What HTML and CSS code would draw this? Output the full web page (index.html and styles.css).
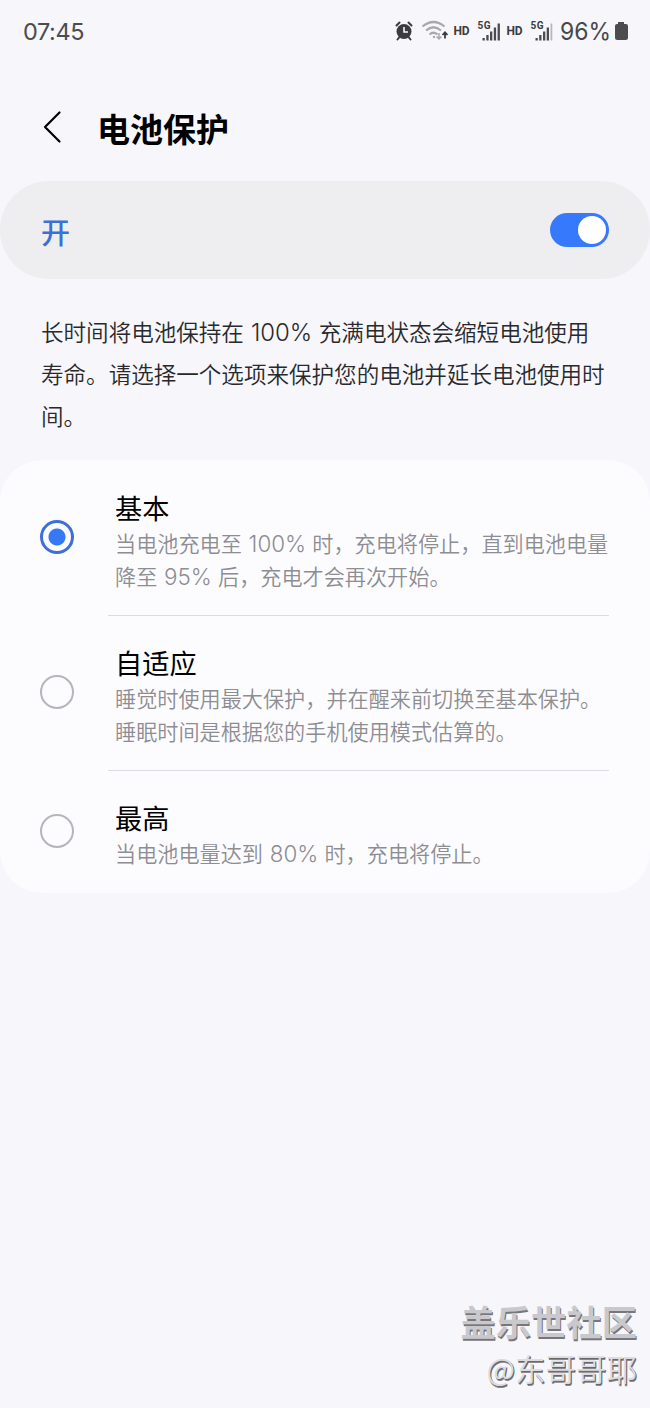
FILE: index.html
```html
<!DOCTYPE html>
<html lang="zh-CN">
<head>
<meta charset="utf-8">
<title>电池保护</title>
<link rel="stylesheet" href="styles.css">
</head>
<body>
<div class="screen">
  <header class="status">
    <span class="clock">07:45</span>
    <svg class="status-icons" width="236" height="30" viewBox="394 16 236 30">
      <g fill="none" stroke="#3c3c3e">
        <circle cx="404" cy="31.500" r="7.500" fill="#3c3c3e" stroke="none"/>
        <path d="M396.500 25.500l3-3M411.500 25.500l-3-3M399.500 37l-2 2.500M408.500 37l2 2.500" stroke-width="2" stroke-linecap="round"/>
        <path d="M404 27v5h4" stroke="#f6f6fb" stroke-width="1.600"/>
      </g>
      <g fill="none" stroke="#a9a9ad" stroke-width="2.200">
        <path d="M422.500 26.500Q433.500 17.500 444.500 26.500M426 30.500Q433.500 24 441 30.500M429.500 34.500Q433.500 31 437.500 34.500"/>
        <circle cx="434" cy="37" r="1.200" fill="#a9a9ad" stroke="none"/>
        <path d="M439 33v6M436.500 36.500l2.500 2.500 2.500-2.500" stroke-width="1.500"/>
        <path d="M445 38.500v-6M442.500 35l2.500-2.700 2.500 2.700" stroke="#3c3c3e" stroke-width="1.800"/>
      </g>
      <g class="status-label">
        <text x="453.500" y="35.300" font-size="12" textLength="16">HD</text>
        <text x="477.500" y="29" font-size="10" textLength="13">5G</text>
        <text x="506.500" y="35.300" font-size="12" textLength="16">HD</text>
        <text x="530.500" y="29" font-size="10" textLength="13">5G</text>
      </g>
      <g fill="#4c4c4e">
        <path d="M482.500 38h2.300v2.500h-2.300zM486.300 35h2.300v5.500h-2.300zM490 31.500h2.300v9h-2.300zM493.800 27.500h2.300v13h-2.300zM497.600 23.500h2.300v17h-2.300z"/>
        <path d="M535.500 38h2.300v2.500h-2.300zM539.200 35h2.300v5.500h-2.300zM543 31.500h2.300v9h-2.300zM546.700 27.500h2.300v13h-2.300z"/>
        <path d="M550.500 23.500h1.800v17h-1.800z" fill="#b8b8bc"/>
        <path d="M618 22h6v2h2q2 0 2 2v11.500q0 2.500-2.500 2.500h-8q-2.500 0-2.500-2.500v-11.500q0-2 2-2h1z"/>
      </g>
      <text class="percent" x="560" y="40" textLength="51" lengthAdjust="spacingAndGlyphs">96%</text>
    </svg>
  </header>

  <div class="title-bar">
    <svg class="back" width="20" height="34" viewBox="0 0 20 34"><path d="M17.500 2.500L3 17l14.500 14.500" fill="none" stroke="#000" stroke-width="2.200" stroke-linecap="round" stroke-linejoin="round"/></svg>
    <h1 class="title">电池保护</h1>
  </div>

  <div class="master">
    <span class="master-label">开</span>
    <span class="switch"><span class="knob"></span></span>
  </div>

  <p class="intro">长时间将电池保持在 <span class="num">100%</span> 充满电状态会缩短电池使用<br>寿命。请选择一个选项来保护您的电池并延长电池使用时<br>间。</p>

  <main class="options">
    <section class="option">
      <span class="radio radio-on"></span>
      <div class="option-body">
        <h2 class="option-name">基本</h2>
        <p class="option-desc">当电池充电至 <span class="num">100%</span> 时，充电将停止，直到电池电量<br>降至 <span class="num">95%</span> 后，充电才会再次开始。</p>
      </div>
    </section>
    <section class="option">
      <span class="radio"></span>
      <div class="option-body">
        <h2 class="option-name">自适应</h2>
        <p class="option-desc">睡觉时使用最大保护，并在醒来前切换至基本保护。<br>睡眠时间是根据您的手机使用模式估算的。</p>
      </div>
    </section>
    <section class="option">
      <span class="radio"></span>
      <div class="option-body">
        <h2 class="option-name">最高</h2>
        <p class="option-desc">当电池电量达到 <span class="num">80%</span> 时，充电将停止。</p>
      </div>
    </section>
  </main>

  <footer class="watermark">
    <div class="mark-site">盖乐世社区</div>
    <div class="mark-user">@东哥哥耶</div>
  </footer>
</div>
</body>
</html>
```
FILE: styles.css
```css
* { box-sizing: border-box; }
body, h1, h2, p { margin: 0; }
body {
  background: #f6f6fb;
  font-family: "Noto Sans CJK SC", sans-serif;
  color: #000;
}
.screen {
  height: 1408px;
  display: flex;
  flex-direction: column;
  overflow: hidden;
}
.status {
  height: 62px;
  padding: 16px 20px 0 23px;
  display: flex;
  justify-content: space-between;
}
.clock {
  font: 400 23.5px/31px Inter, sans-serif;
  letter-spacing: -0.4px;
  color: #4c4c4f;
}
.status-icons { display: block; }
.status-label {
  font-family: Roboto, sans-serif;
  font-weight: 700;
  fill: #3c3c3e;
}
.percent { font: 400 24px Inter, sans-serif; fill: #48484a; }
.title-bar {
  height: 119px;
  padding: 11px 0 0 42px;
  display: flex;
  align-items: center;
  gap: 35px;
}
.back { margin-top: -1px; }
.title {
  padding-top: 2px;
  font-size: 33px;
  line-height: 48px;
  font-weight: 700;
}
.master {
  height: 98px;
  padding: 0 41px;
  border-radius: 49px;
  background: #eeeef1;
  display: flex;
  align-items: center;
  justify-content: space-between;
}
.master-label {
  padding-top: 2px;
  font-size: 29px;
  line-height: 42px;
  font-weight: 500;
  color: #3b70d5;
}
.switch {
  width: 59px;
  height: 34px;
  padding: 3px;
  border-radius: 17px;
  background: #3779fc;
  display: flex;
  justify-content: flex-end;
}
.knob {
  width: 28px;
  height: 28px;
  border-radius: 50%;
  background: #fff;
}
.intro {
  height: 181px;
  padding: 31px 0 0 41px;
  font-size: 22.55px;
  line-height: 42px;
  font-weight: 350;
  color: #29292c;
  white-space: nowrap;
}
.num {
  display: inline-block;
  padding: 0 1.5px 0 2px;
  font-family: Inter, sans-serif;
  font-size: 1.06em;
  line-height: 1;
}
.options {
  height: 433px;
  padding: 0 41px 0 40px;
  border-radius: 42px;
  background: #fcfcff;
}
.option {
  display: flex;
  align-items: center;
  gap: 34px;
  height: 155px;
}
.option:first-child { height: 156px; }
.option:last-child { height: 122px; }
.option-body {
  flex: 1;
  height: 100%;
  padding: 26px 0 0 7px;
  border-bottom: 1px solid #dcdce0;
}
.option:first-child .option-body { padding-top: 27px; }
.option:last-child .option-body { border-bottom: 0; }
.option-name {
  font-size: 27.2px;
  line-height: 40px;
  font-weight: 400;
}
.option-desc {
  font-size: 21.15px;
  line-height: 32.5px;
  font-weight: 350;
  color: #8d8d92;
  white-space: nowrap;
}
.radio {
  width: 34px;
  height: 34px;
  margin-bottom: 3px;
  border: 2px solid #b5b5ba;
  border-radius: 50%;
}
.radio-on {
  border: 3px solid #3c70d8;
  background: radial-gradient(circle, #3678f6 8px, transparent 9px);
}
.watermark {
  margin-top: auto;
  padding: 0 13px 17px 0;
  text-align: right;
  color: #c9c9cd;
}
.mark-site {
  font-size: 35.3px;
  line-height: 48px;
  font-weight: 700;
  text-shadow: 1px 2px 0 #77777b;
}
.mark-user {
  font-size: 30.5px;
  line-height: 46px;
  font-weight: 350;
  color: #dcdce0;
  text-shadow: 1px 1px 0 #68686c, 1px 2px 0 #8a8a8e;
}
```
